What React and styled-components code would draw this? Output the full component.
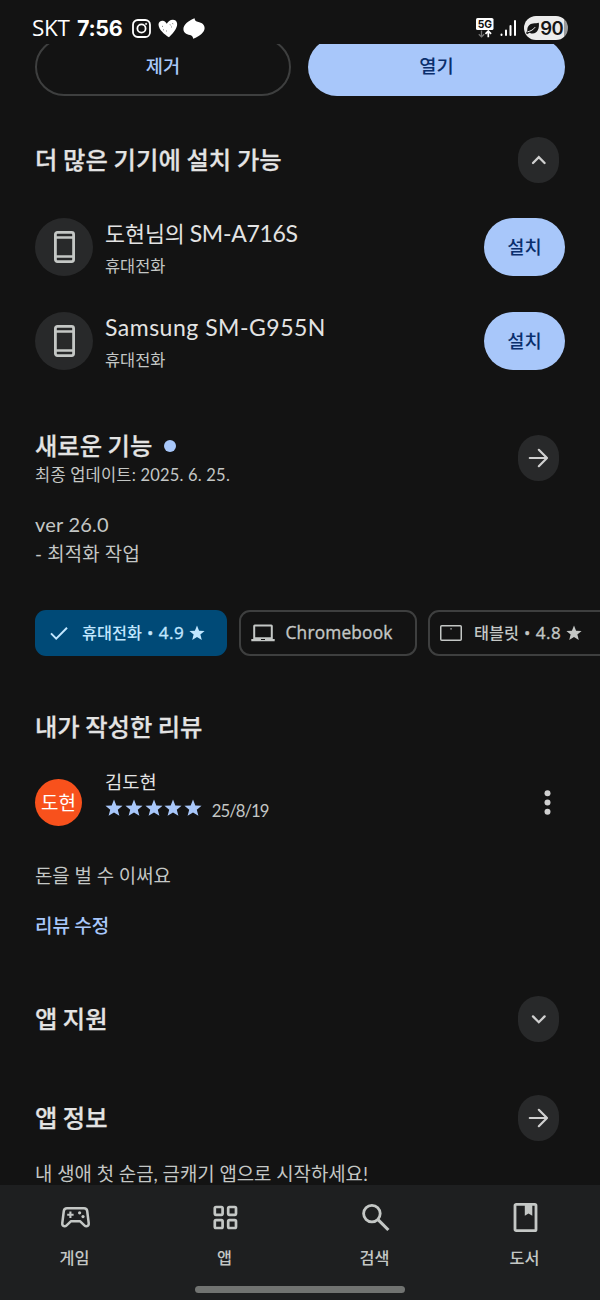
import React from "react";
import styled, { createGlobalStyle } from "styled-components";

const GlobalStyle = createGlobalStyle`
  * { box-sizing: border-box; }
  html, body { margin: 0; padding: 0; background: #131313; }
  body {
    font-family: "Lato", "Noto Sans CJK KR", sans-serif;
    color: #e3e3e3;
    overflow: hidden;
  }
  svg { display: block; flex: none; }
`;

const Screen = styled.div`
  width: 600px;
  height: 1300px;
  display: flex;
  flex-direction: column;
  overflow: hidden;
  background: #131313;
`;

const StatusBar = styled.header`
  flex: none;
  height: 44px;
  padding: 13px 32px 0 32px;
  display: flex;
  justify-content: space-between;
  color: #fff;
`;

const StatusGroup = styled.div`
  display: flex;
  align-items: center;
  height: 30px;
`;

const Carrier = styled.span`
  font: 400 22.5px/30px "Open Sans", sans-serif;
  letter-spacing: -0.3px;
  width: 45px;
`;

const Clock = styled.span`
  font: 700 21.5px/30px "Inter", sans-serif;
  letter-spacing: -0.3px;
  width: 55px;
`;

const Battery = styled.div`
  display: flex;
  align-items: center;
  justify-content: flex-end;
  width: 44px;
  height: 24px;
  padding: 0 5px 0 2px;
  border-radius: 12px;
  background: linear-gradient(90deg, #ececec 0 40px, #9b9b9b 40px);
  color: #161616;
  font: 600 18.5px/24px "Inter", sans-serif;
  letter-spacing: -0.6px;
`;

const Content = styled.main`
  flex: none;
  height: 1141px;
  overflow: hidden;
  display: flex;
  flex-direction: column;
`;

const Actions = styled.div`
  flex: none;
  height: 52px;
  padding: 0 35px;
  display: flex;
  align-items: flex-end;
  gap: 17px;
  overflow: hidden;
`;

const ActionButton = styled.button`
  flex: ${(p) => (p.$filled ? "0 0 257px" : "0 0 256px")};
  height: 58px;
  border: ${(p) => (p.$filled ? "none" : "2px solid #3e3f3f")};
  border-radius: 29px;
  background: ${(p) => (p.$filled ? "#a8c7fa" : "transparent")};
  color: ${(p) => (p.$filled ? "#0a2f6d" : "#a8c7fa")};
  font: 500 18.7px/28px "Noto Sans CJK KR", sans-serif;
  padding: 0 0 4px;
`;

const SectionHeader = styled.div`
  flex: none;
  height: 46px;
  margin-top: ${(p) => p.$top}px;
  padding: 0 41px 0 35px;
  display: flex;
  align-items: center;
  justify-content: space-between;
`;

const Title = styled.h2`
  margin: 0 0 2px;
  font: 500 24.3px/32px "Noto Sans CJK KR", sans-serif;
  color: #e3e3e3;
  -webkit-text-stroke: 0.25px currentColor;
  letter-spacing: ${(p) => p.$track || 0}px;
  display: flex;
  align-items: center;
`;

const RoundButton = styled.button`
  width: 41px;
  height: 46px;
  border: 0;
  padding: 0;
  border-radius: 20.5px;
  background: #28292a;
  color: #d0d0d0;
  display: flex;
  align-items: center;
  justify-content: center;
`;

const DeviceRow = styled.div`
  flex: none;
  height: 58px;
  margin-top: ${(p) => p.$top}px;
  padding: 0 35px;
  display: flex;
  align-items: center;
`;

const DeviceIcon = styled.div`
  width: 58px;
  height: 58px;
  border-radius: 50%;
  background: #28292a;
  color: #c4c7c5;
  display: flex;
  align-items: center;
  justify-content: center;
`;

const DeviceText = styled.div`
  flex: 1;
  margin-left: 12px;
  padding-top: 3px;
`;

const DeviceName = styled.div`
  height: 32px;
  font: 400 21.7px/32px "Noto Sans CJK KR", sans-serif;
  white-space: nowrap;
`;

const Model = styled.span`
  font: 400 23px/30px "Lato", sans-serif;
  letter-spacing: ${(p) => p.$track}px;
`;

const DeviceKind = styled.div`
  font: 400 16.4px/32px "Noto Sans CJK KR", sans-serif;
  color: #c4c7c5;
`;

const InstallButton = styled.button`
  width: 81px;
  height: 58px;
  border: 0;
  border-radius: 29px;
  background: #a8c7fa;
  color: #0a2f6d;
  font: 500 18.7px/28px "Noto Sans CJK KR", sans-serif;
  padding: 0 0 2px;
`;

const NewDot = styled.span`
  width: 12px;
  height: 12px;
  margin: 2px 0 0 12px;
  border-radius: 50%;
  background: #a8c7fa;
`;

const Updated = styled.div`
  font: 400 16.5px/24px "Lato", "Noto Sans CJK KR", sans-serif;
  letter-spacing: 0.2px;
  color: #c4c7c5;
`;

const Paragraph = styled.p`
  flex: none;
  margin: ${(p) => p.$top}px 0 0;
  padding: 0 35px;
  font: 400 18.85px/29px "Lato", "Noto Sans CJK KR", sans-serif;
  letter-spacing: ${(p) => p.$track || 0}px;
  color: #c4c7c5;
  white-space: pre-line;
`;

const Version = styled.span`
  font-size: 20px;
  line-height: 24px;
`;

const Chips = styled.div`
  flex: none;
  height: 46px;
  margin-top: 42px;
  padding-left: 35px;
  display: flex;
  gap: 11.5px;
  overflow: hidden;
`;

const Chip = styled.button`
  flex: 0 0 ${(p) => p.$width}px;
  height: 46px;
  padding: 0 0 0 ${(p) => p.$pad}px;
  display: flex;
  align-items: center;
  border: ${(p) => (p.$active ? "none" : "2px solid #3e3f3f")};
  border-radius: 11px;
  background: ${(p) => (p.$active ? "#004a77" : "transparent")};
  color: ${(p) => (p.$active ? "#c2e7ff" : "#c4c7c5")};
`;

const ChipLabel = styled.span`
  margin: -2px 0 0 ${(p) => p.$left}px;
  font: 500 16.3px/24px "Noto Sans CJK KR", sans-serif;
  white-space: nowrap;
`;

const ChipLatin = styled.span`
  margin: 0 5px 0 ${(p) => p.$left}px;
  font: 500 ${(p) => p.$size}px/24px "Open Sans", sans-serif;
  -webkit-text-stroke: 0.35px currentColor;
  letter-spacing: ${(p) => p.$track || 0}px;
  white-space: nowrap;
`;

const Review = styled.div`
  flex: none;
  height: 60px;
  margin-top: 18px;
  padding: 0 49px 0 35px;
  display: flex;
  align-items: flex-start;
`;

const Avatar = styled.div`
  width: 47px;
  height: 47px;
  margin-top: 11px;
  border-radius: 50%;
  background: #f8511c;
  color: #fff;
  text-align: center;
  font: 400 19px/46px "Noto Sans CJK KR", sans-serif;
`;

const ReviewText = styled.div`
  flex: 1;
  margin-left: 23px;
`;

const Reviewer = styled.div`
  font: 400 18.7px/26px "Noto Sans CJK KR", sans-serif;
`;

const Rating = styled.div`
  display: flex;
  gap: 1.75px;
  margin-top: 4.5px;
`;

const ReviewDate = styled.span`
  margin: 2px 0 0 8px;
  font: 400 16.7px/20px "Lato", sans-serif;
  letter-spacing: -0.95px;
  color: #c4c7c5;
`;

const MoreButton = styled.button`
  border: 0;
  padding: 0;
  margin-top: 22px;
  background: none;
  color: #d0d0d0;
`;

const EditLink = styled.a`
  flex: none;
  margin-top: 21px;
  padding-left: 35px;
  font: 500 19px/28px "Noto Sans CJK KR", sans-serif;
  color: #a8c7fa;
`;

const BottomNav = styled.nav`
  flex: none;
  height: 115px;
  background: #1e1f20;
  display: flex;
  flex-direction: column;
  align-items: center;
`;

const NavItems = styled.div`
  width: 600px;
  height: 101px;
  display: grid;
  grid-template-columns: repeat(4, 150px);
`;

const NavItem = styled.div`
  display: flex;
  flex-direction: column;
  align-items: center;
  padding: 14px 1px 0 0;
  gap: 10px;
  color: #c4c7c5;
  font: 500 16.3px/24px "Noto Sans CJK KR", sans-serif;
`;

const HomeHandle = styled.div`
  width: 210px;
  height: 7px;
  border-radius: 4px;
  background: #717371;
`;

const Chevron = ({ down }) => (
  <svg width="18" height="18" viewBox="0 0 18 18" fill="none" stroke="currentColor" strokeWidth="2.3" strokeLinecap="round">
    <path d={down ? "M3 6.4L8.8 12.2L14.6 6.4" : "M3 12L8.8 6.2L14.6 12"} />
  </svg>
);

const Arrow = () => (
  <svg width="22" height="22" viewBox="0 0 22 22" fill="none" stroke="currentColor" strokeWidth="2.2" strokeLinecap="round" strokeLinejoin="round">
    <path d="M1.8 11H18.8M10.8 2.8L19 11L10.8 19.2" />
  </svg>
);

const Phone = () => (
  <svg width="21" height="32" viewBox="0 0 21 32" fill="none" stroke="currentColor" strokeWidth="2.8">
    <rect x="1.4" y="1.4" width="18.2" height="29.2" rx="2" />
    <path d="M1.4 6.6H19.6M1.4 25.4H19.6" strokeWidth="2.5" />
  </svg>
);

const Star = ({ size, color }) => (
  <svg width={size} height={size} viewBox="0 0 20 20" fill={color || "currentColor"}>
    <path d="M10 .6L12.6 7.1L19.5 7.5L14.2 11.9L16 18.7L10 15L4 18.7L5.8 11.9L.5 7.5L7.4 7.1Z" />
  </svg>
);

const Camera = () => (
  <svg width="19" height="19" viewBox="0 0 19 19" fill="none" stroke="currentColor" strokeWidth="1.8">
    <rect x="1" y="1" width="17" height="17" rx="4.8" />
    <circle cx="9.5" cy="9.5" r="4.1" />
    <circle cx="14.1" cy="4.9" r=".65" fill="currentColor" strokeWidth=".8" />
  </svg>
);

const Heart = () => (
  <svg width="20" height="19" viewBox="0 0 20 19" style={{ marginLeft: 7 }}>
    <path d="M11 18.2C6.5 15.5 .8 10.7.5 5.7C.4 2.7 2.7 1.6 4.7 1.7C6.5 1.8 8 3.2 8.8 4.8C10 2.4 12.2.7 15 .8C18.5 1 19.7 3.9 19 6.8C18 11 14 15.6 11 18.2Z" fill="#fff" />
    <path d="M4 7l1 .7M5 11l.9-.3M8 12.4l.9-.7M12 5.4l.7 1M14.5 4.2l.5 1M13 8.3l.9-.6" stroke="#555" strokeWidth=".8" />
  </svg>
);

const Swirl = () => (
  <svg width="22" height="21" viewBox="0 0 22 21" fill="#fff" style={{ marginLeft: 5 }}>
    <path d="M11.6.3C11.7 2 12.4 3.2 14.6 3.7C19.2 4.6 21.7 6.8 21.6 10.2C21.4 14.2 17.2 17.8 10.2 20.7C9.8 18.6 9 17.6 7 17.1C3 16.2.4 14.3.4 11C.4 6.8 4.9 3 11.6.3Z" />
  </svg>
);

const Network = () => (
  <svg width="18" height="20" viewBox="0 0 18 20" style={{ marginRight: 6 }}>
    <rect width="17.5" height="12" rx="1.6" fill="#fff" />
    <text x="8.8" y="9.8" textAnchor="middle" fill="#111" fontFamily="Inter" fontWeight="700" fontSize="10.3">5G</text>
    <path d="M5.5 12.5V18.8M2.8 16.2L5.5 18.9L8.2 16.2" fill="none" stroke="#777" strokeWidth="1.3" />
    <path d="M12.3 19.3V13.3M9.5 15.8L12.3 13L15.1 15.8" fill="none" stroke="#fff" strokeWidth="1.7" />
  </svg>
);

const Signal = () => (
  <svg width="17" height="18" viewBox="0 0 17 18" fill="none" stroke="#fff" strokeWidth="2" strokeLinecap="round" style={{ marginRight: 7 }}>
    <path d="M1.5 15.5V16M6 11.5V16M10.5 7V16M15 2V16" />
  </svg>
);

const Leaf = () => (
  <svg width="14" height="13" viewBox="0 0 14 13">
    <path d="M1.3 8.5C1.2 4 3.8 1.6 7 1.4C9.7 1.2 11 1.2 12.8.8C13.6 6 11.5 12 6.2 11.6C4.9 11.5 4.2 11.2 3.6 10.7L1 12.3L.1 11Z" fill="#161616" />
    <path d="M1.4 9.8C5 9.1 7.3 7.6 9.2 5.1" fill="none" stroke="#ececec" strokeWidth="1" />
  </svg>
);

const Check = () => (
  <svg width="18" height="15" viewBox="0 0 18 15" fill="none" stroke="currentColor" strokeWidth="2">
    <path d="M1 7.4L6.2 12.6L17 1.8" />
  </svg>
);

const Laptop = () => (
  <svg width="24" height="18" viewBox="0 0 24 18" fill="currentColor">
    <path fillRule="evenodd" d="M2.2 2.1Q2.2.6 3.7.6H20.3Q21.8.6 21.8 2.1V15H23.7V17.3H.3V15H2.2ZM4.2 2.6V13.2H19.8V2.6ZM10 15V15.9H14V15Z" />
  </svg>
);

const Tablet = () => (
  <svg width="22" height="16" viewBox="0 0 22 16" fill="none" stroke="currentColor" strokeWidth="1.5">
    <rect x=".75" y=".75" width="20.5" height="14.5" rx="1" />
    <path d="M10.4 3.8H11.7" strokeWidth="1.3" />
  </svg>
);

const More = () => (
  <svg width="7" height="25" viewBox="0 0 7 25" fill="currentColor">
    <circle cx="3.5" cy="3.2" r="3" />
    <circle cx="3.5" cy="12.5" r="3" />
    <circle cx="3.5" cy="21.8" r="3" />
  </svg>
);

const Gamepad = () => (
  <svg width="36" height="36" viewBox="0 0 36 36" fill="none" stroke="currentColor" strokeWidth="2.5" strokeLinejoin="round">
    <path d="M10 9.3H27Q29.8 9.3 30.2 12L31.7 24Q32 27 29.6 27.2Q28.4 27.3 27.4 26.3L23.2 22.3H13.8L9.6 26.3Q8.6 27.3 7.4 27.2Q5 27 5.3 24L6.8 12Q7.2 9.3 10 9.3Z" />
    <path d="M13.4 12.6V19M10.2 15.8H16.6" strokeWidth="2.1" />
    <circle cx="22.6" cy="13.8" r="1.6" fill="currentColor" stroke="none" />
    <circle cx="26" cy="17.6" r="1.6" fill="currentColor" stroke="none" />
  </svg>
);

const AppsGrid = () => (
  <svg width="36" height="36" viewBox="0 0 36 36" fill="none" stroke="currentColor" strokeWidth="2.7">
    <rect x="7.8" y="8" width="7.8" height="7.8" rx="1.2" />
    <rect x="21.2" y="8" width="7.8" height="7.8" rx="1.2" />
    <rect x="7.8" y="21.2" width="7.8" height="7.8" rx="1.2" />
    <rect x="21.2" y="21.2" width="7.8" height="7.8" rx="1.2" />
  </svg>
);

const Search = () => (
  <svg width="36" height="36" viewBox="0 0 36 36" fill="none" stroke="currentColor" strokeWidth="2.8">
    <circle cx="14.9" cy="14.6" r="8.3" />
    <path d="M21 20.6L31.4 31" strokeWidth="3.1" />
  </svg>
);

const Book = () => (
  <svg width="36" height="36" viewBox="0 0 36 36" fill="none" stroke="currentColor" strokeWidth="2.8" strokeLinejoin="round">
    <rect x="8" y="5.3" width="21" height="26.3" rx="1.2" />
    <path d="M17.8 5.5H25.3V16.8L21.5 14.6L17.8 16.8Z" fill="currentColor" stroke="none" />
  </svg>
);

const devices = [
  { owner: "도현님의 ", model: "SM-A716S", track: -0.3, top: 35 },
  { owner: "", model: "Samsung SM-G955N", track: 0.5, top: 36 },
];

const tabs = [
  { label: "게임", Icon: Gamepad },
  { label: "앱", Icon: AppsGrid },
  { label: "검색", Icon: Search },
  { label: "도서", Icon: Book },
];

export default function App() {
  return (
    <Screen>
      <GlobalStyle />
      <StatusBar>
        <StatusGroup>
          <Carrier>SKT</Carrier>
          <Clock>7:56</Clock>
          <Camera />
          <Heart />
          <Swirl />
        </StatusGroup>
        <StatusGroup>
          <Network />
          <Signal />
          <Battery><Leaf />90</Battery>
        </StatusGroup>
      </StatusBar>

      <Content>
        <Actions>
          <ActionButton>제거</ActionButton>
          <ActionButton $filled>열기</ActionButton>
        </Actions>

        <SectionHeader $top={41}>
          <Title $track={0.1}>더 많은 기기에 설치 가능</Title>
          <RoundButton><Chevron /></RoundButton>
        </SectionHeader>
        {devices.map((d) => (
          <DeviceRow key={d.model} $top={d.top}>
            <DeviceIcon><Phone /></DeviceIcon>
            <DeviceText>
              <DeviceName>{d.owner}<Model $track={d.track}>{d.model}</Model></DeviceName>
              <DeviceKind>휴대전화</DeviceKind>
            </DeviceText>
            <InstallButton>설치</InstallButton>
          </DeviceRow>
        ))}

        <SectionHeader $top={65}>
          <div>
            <Title>새로운 기능<NewDot /></Title>
            <Updated>최종 업데이트: 2025. 6. 25.</Updated>
          </div>
          <RoundButton><Arrow /></RoundButton>
        </SectionHeader>
        <Paragraph $top={29} $track={0.2}><Version>ver 26.0</Version>{"\n- 최적화 작업"}</Paragraph>

        <Chips>
          <Chip $active $width={192} $pad={15}>
            <Check />
            <ChipLabel $left={14}>휴대전화</ChipLabel>
            <ChipLatin $left={5} $size={17} $track={0.5}>• 4.9</ChipLatin>
            <Star size={16} />
          </Chip>
          <Chip $width={178} $pad={10}>
            <Laptop />
            <ChipLatin $left={11} $size={17.3} $track={0.2}>Chromebook</ChipLatin>
          </Chip>
          <Chip $width={193} $pad={10}>
            <Tablet />
            <ChipLabel $left={12}>태블릿</ChipLabel>
            <ChipLatin $left={5} $size={17} $track={0.5}>• 4.8</ChipLatin>
            <Star size={16} />
          </Chip>
        </Chips>

        <SectionHeader $top={48}>
          <Title>내가 작성한 리뷰</Title>
        </SectionHeader>
        <Review>
          <Avatar>도현</Avatar>
          <ReviewText>
            <Reviewer>김도현</Reviewer>
            <Rating>
              {[1, 2, 3, 4, 5].map((n) => <Star key={n} size={18} color="#a8c7fa" />)}
              <ReviewDate>25/8/19</ReviewDate>
            </Rating>
          </ReviewText>
          <MoreButton><More /></MoreButton>
        </Review>
        <Paragraph $top={33}>돈을 벌 수 이써요</Paragraph>
        <EditLink>리뷰 수정</EditLink>

        <SectionHeader $top={57}>
          <Title>앱 지원</Title>
          <RoundButton><Chevron down /></RoundButton>
        </SectionHeader>
        <SectionHeader $top={53}>
          <Title>앱 정보</Title>
          <RoundButton><Arrow /></RoundButton>
        </SectionHeader>
        <Paragraph $top={18}>내 생애 첫 순금, 금캐기 앱으로 시작하세요!</Paragraph>
      </Content>

      <BottomNav>
        <NavItems>
          {tabs.map(({ label, Icon }) => (
            <NavItem key={label}><Icon />{label}</NavItem>
          ))}
        </NavItems>
        <HomeHandle />
      </BottomNav>
    </Screen>
  );
}
